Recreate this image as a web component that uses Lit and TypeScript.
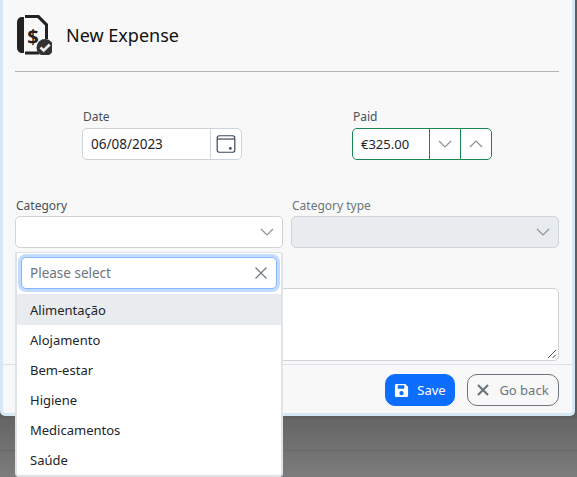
import { LitElement, css, html } from 'lit'
import { customElement } from 'lit/decorators.js'

const chevronDown = html`<svg viewBox="0 0 16 16" width="16" height="16" fill="none" stroke="#8a929a" stroke-width="1.2"><path d="M2 5l6 6 6-6"/></svg>`
const chevronUp = html`<svg viewBox="0 0 16 16" width="16" height="16" fill="none" stroke="#8a929a" stroke-width="1.2"><path d="M2 11l6-6 6 6"/></svg>`

const options = ['Alimentação', 'Alojamento', 'Bem-estar', 'Higiene', 'Medicamentos', 'Saúde']

@customElement('app-root')
export class AppRoot extends LitElement {
  render() {
    return html`
      <div class="page">
        <div class="modal">
          <header class="head">
            <svg class="logo" viewBox="0 0 36 40" width="36" height="40">
              <path fill="#222" d="M6.500 2h1.500v36h-1.500c-3.500 0-5.500-2-5.500-5.500v-25c0-3.500 2-5.500 5.500-5.500z"/>
              <path fill="#222" d="M9 0h14l9 9v15h-3v-13.500l-7.500-7.500h-12.500z"/>
              <path fill="#222" d="M9 36.500h13l1.500 3h-14.500z"/>
              <text x="17" y="29" text-anchor="middle" class="dollar">$</text>
              <circle cx="29" cy="32.500" r="8.500" fill="#333"/>
              <path d="M24.500 32.500l3.200 3 6-6" fill="none" stroke="#eee" stroke-width="2.600"/>
            </svg>
            <h1>New Expense</h1>
          </header>
          <div class="rule"></div>

          <div class="top-row">
            <div class="date">
              <label>Date</label>
              <div class="group">
                <span class="value">06/08/2023</span>
                <span class="addon">
                  <svg viewBox="0 0 20 20" width="22" height="22" fill="none" stroke="#3d4a5c" stroke-width="1.100">
                    <rect x="2" y="2.500" width="16" height="15" rx="2"/>
                    <path d="M2 5.500h16"/>
                    <circle cx="14" cy="14" r=".7" fill="#3d4a5c"/>
                  </svg>
                </span>
              </div>
            </div>
            <div class="paid">
              <label>Paid</label>
              <div class="group ok">
                <span class="value">€325.00</span>
                <span class="spin">${chevronDown}</span>
                <span class="spin">${chevronUp}</span>
              </div>
            </div>
          </div>

          <div class="cat-row">
            <div class="cat">
              <label>Category</label>
              <div class="select">${chevronDown}</div>
              <div class="dropdown">
                <div class="search-wrap">
                  <div class="search">
                    <span>Please select</span>
                    <svg viewBox="0 0 14 14" width="14" height="14" fill="none" stroke="#6c757d" stroke-width="1.100"><path d="M1.500 1.500l11 11M12.500 1.500l-11 11"/></svg>
                  </div>
                </div>
                <ul>
                  ${options.map((o, i) => html`<li class=${i === 0 ? 'active' : ''}>${o}</li>`)}
                </ul>
              </div>
            </div>
            <div class="cat disabled">
              <label>Category type</label>
              <div class="select">${chevronDown}</div>
            </div>
          </div>

          <div class="notes"><div class="textarea">
            <svg class="grip" viewBox="0 0 10 10" width="10" height="10" fill="none" stroke="#555" stroke-width="1"><path d="M1 9l8-8M5.500 9l3.500-3.500"/></svg>
          </div></div>

          <footer class="foot">
            <button class="btn save">
              <svg viewBox="0 0 16 16" width="15" height="15" fill="#fff"><path d="M2 1h10l3 3v9.500c0 .8-.7 1.500-1.500 1.500h-11c-.8 0-1.500-.7-1.500-1.500v-11c0-.8.700-1.500 1.500-1.500zM4 2.500v3.500h7v-3.500zM8 8.500a2.300 2.300 0 100 4.600 2.300 2.300 0 000-4.600z" fill-rule="evenodd"/></svg>
              Save
            </button>
            <button class="btn back">
              <svg viewBox="0 0 12 12" width="12" height="12" fill="none" stroke="#6c757d" stroke-width="2.200"><path d="M1 1l10 10M11 1l-10 10"/></svg>
              Go back
            </button>
          </footer>
        </div>
      </div>
    `
  }

  static styles = css`
    :host {
      display: block;
      font-family: 'Noto Sans', 'Open Sans', sans-serif;
      color: #212529;
    }
    * {
      box-sizing: border-box;
    }
    .page {
      height: 477px;
      width: 577px;
      overflow: hidden;
      background:
        linear-gradient(transparent 450px, #686868 450px 451px, transparent 451px),
        linear-gradient(#5e5e5e 0 416px, #666 420px, #7c7c7c 477px);
    }
    .modal {
      width: 575px;
      height: 416px;
      background: #f8f8f8;
      border: solid #d6e8f3;
      border-width: 0 3px 3px 3px;
      border-radius: 0 0 5px 5px;
    }
    .head {
      display: flex;
      align-items: center;
      gap: 14px;
      padding: 15px 0 0 13px;
      height: 55px;
    }
    .logo {
      flex: none;
    }
    .dollar {
      font: bold 20px 'Noto Sans', sans-serif;
      fill: #222;
    }
    h1 {
      margin: 0;
      font-size: 18px;
      font-weight: 400;
      color: #111;
    }
    .rule {
      height: 1px;
      background: #b5b5b5;
      margin: 16px 13px 0 12px;
    }
    label {
      display: block;
      font-size: 12px;
      line-height: 16px;
      font-weight: 400;
      color: #495057;
      margin-bottom: 3px;
      padding-left: 1px;
    }
    .top-row {
      display: flex;
      padding: 37px 0 0 79px;
      gap: 110px;
    }
    .group {
      display: flex;
      height: 32px;
      align-items: stretch;
      background: #fff;
      border: 1px solid #ced4da;
      border-radius: 5px;
      font-size: 13.500px;
    }
    .date .group {
      width: 160px;
    }
    .paid .group {
      width: 140px;
      border-color: #198754;
    }
    .value {
      flex: 1;
      display: flex;
      align-items: center;
      padding-left: 8px;
    }
    .paid .value {
      font-size: 13px;
    }
    .addon {
      width: 31px;
      display: flex;
      align-items: center;
      justify-content: center;
      border-left: 1px solid #ced4da;
    }
    .spin {
      width: 31px;
      display: flex;
      align-items: center;
      justify-content: center;
      border-left: 1px solid #198754;
    }
    .cat-row {
      display: flex;
      gap: 8px;
      padding: 38px 13px 0 12px;
    }
    .cat {
      position: relative;
      flex: 1;
    }
    .cat label {
      margin-bottom: 2px;
    }
    .select {
      height: 32px;
      background: #fff;
      border: 1px solid #ced4da;
      border-radius: 5px;
      display: flex;
      align-items: center;
      justify-content: flex-end;
      padding-right: 7px;
    }
    .disabled label {
      color: #6c757d;
    }
    .disabled .select {
      background: #e9ecef;
    }
    .dropdown {
      position: absolute;
      z-index: 2;
      top: 54px;
      left: 0;
      width: 267px;
      height: 225px;
      background: #fff;
      border: 1px solid #dee2e6;
      border-left-width: 2px;
      border-bottom-width: 2px;
      border-radius: 2px 2px 4px 4px;
      box-shadow: 1px 0 0 #e4e7ea;
    }
    .search-wrap {
      padding: 4px 4px 5px;
      border-bottom: 1px solid #e9ecef;
    }
    .search {
      height: 32px;
      border: 1px solid #86b7fe;
      border-radius: 5px;
      box-shadow: 0 0 0 3px #c2dbfe;
      display: flex;
      align-items: center;
      justify-content: space-between;
      padding: 0 8px;
      font-size: 13.500px;
      color: #6c757d;
      background: #fff;
    }
    ul {
      list-style: none;
      margin: 0;
      padding: 0;
    }
    li {
      height: 30px;
      padding-left: 13px;
      display: flex;
      align-items: center;
      font-size: 13px;
    }
    li.active {
      background: #e9ecef;
    }
    .notes {
      padding: 40px 13px 0 12px;
    }
    .textarea {
      position: relative;
      height: 73px;
      background: #fff;
      border: 1px solid #ced4da;
      border-radius: 5px;
    }
    .grip {
      position: absolute;
      right: 1px;
      bottom: 1px;
    }
    .foot {
      display: flex;
      justify-content: flex-end;
      gap: 12px;
      margin-top: 3px;
      padding: 9px 13px 0 0;
      border-top: 1px solid #dee2e6;
    }
    .btn {
      display: flex;
      align-items: center;
      height: 32px;
      border-radius: 10px;
      font: 13px 'Noto Sans', 'Open Sans', sans-serif;
      padding: 0;
      justify-content: center;
    }
    .save {
      width: 70px;
      gap: 8px;
      color: #fff;
      background: #0d6efd;
      border: 1px solid #0d6efd;
    }
    .back {
      width: 92px;
      gap: 10px;
      color: #6c757d;
      background: transparent;
      border: 1px solid #6c757d;
    }
  `
}
